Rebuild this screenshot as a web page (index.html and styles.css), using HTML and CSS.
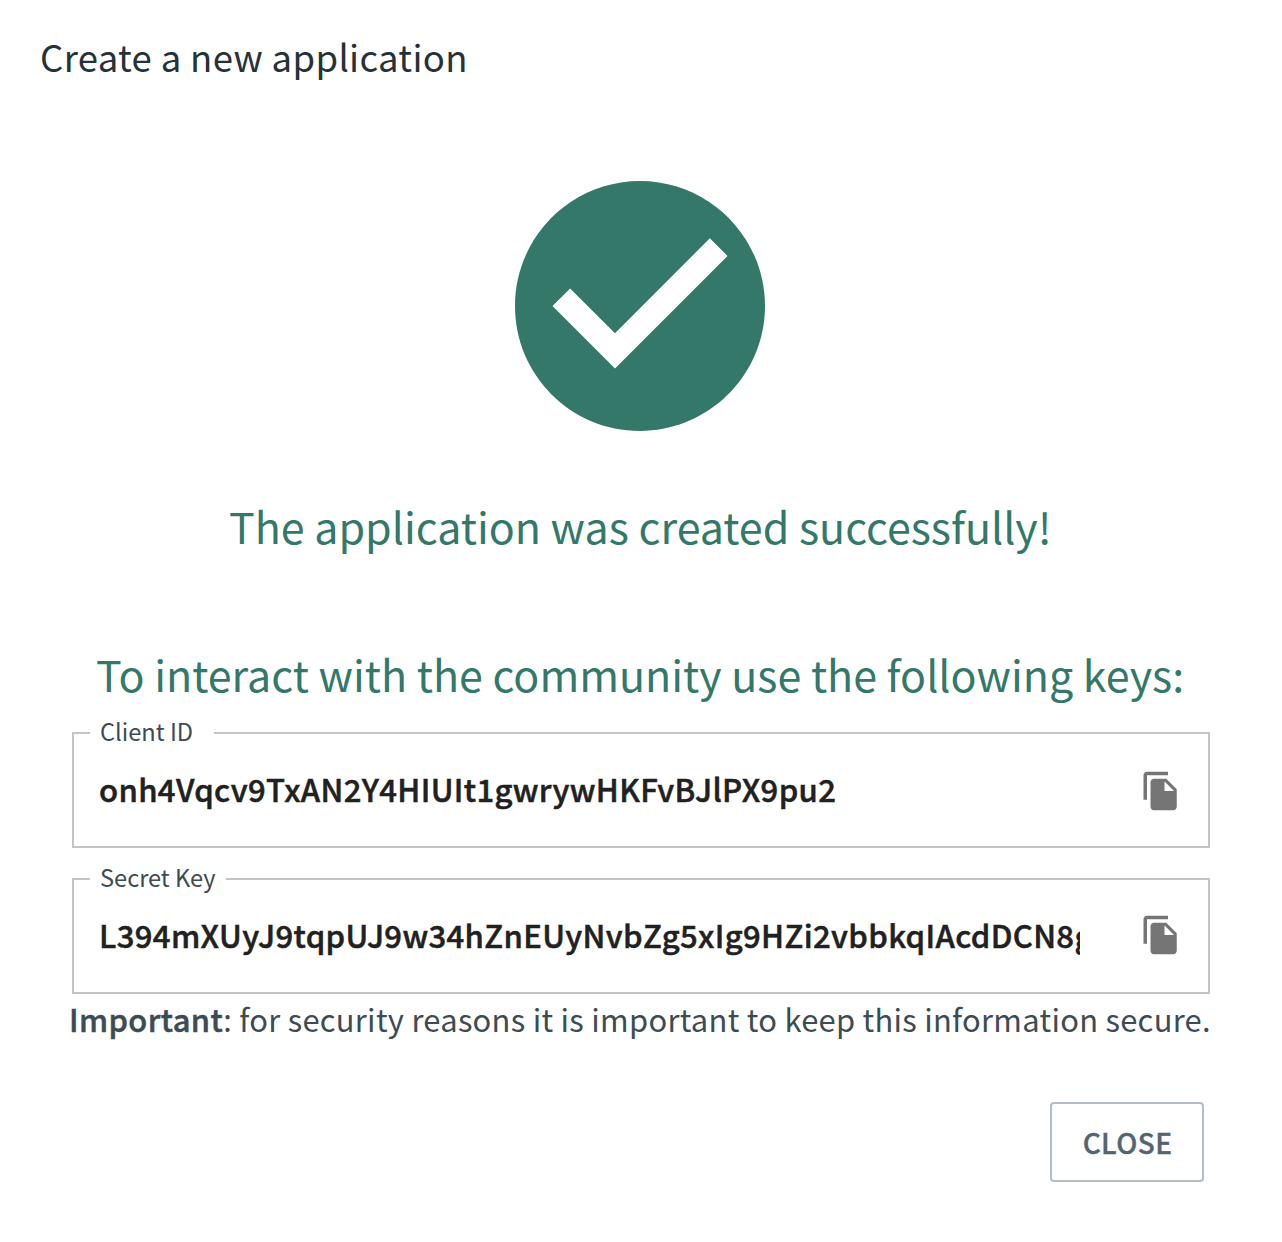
FILE: index.html
```html
<!DOCTYPE html>
<html lang="en">
<head>
<meta charset="utf-8">
<title>Create a new application</title>
<link rel="stylesheet" href="styles.css">
</head>
<body>
<main class="dialog">
  <h1 class="title">Create a new application</h1>
  <svg class="success" viewBox="2 2 20 20" aria-hidden="true">
    <path d="M12 2C6.480 2 2 6.480 2 12s4.480 10 10 10 10-4.480 10-10S17.520 2 12 2zm-2 15-5-5 1.410-1.410L10 14.170l7.590-7.590L19 8l-9 9z"/>
  </svg>
  <p class="headline created">The application was created successfully!</p>
  <p class="headline keys">To interact with the community use the following keys:</p>
  <fieldset class="field client">
    <legend>Client ID</legend>
    <div class="value">onh4Vqcv9TxAN2Y4HIUIt1gwrywHKFvBJlPX9pu2</div>
    <svg class="copy" viewBox="0 0 24 24"><path d="M16 1H4c-1.100 0-2 .9-2 2v14h2V3h12V1zm-1 4 6 6v10c0 1.100-.9 2-2 2H7.990C6.890 23 6 22.100 6 21l.01-14c0-1.100.89-2 1.990-2h7zm-1 7h5.500L14 6.500V12z"/></svg>
  </fieldset>
  <fieldset class="field secret">
    <legend>Secret Key</legend>
    <div class="value">L394mXUyJ9tqpUJ9w34hZnEUyNvbZg5xIg9HZi2vbbkqIAcdDCN8g</div>
    <svg class="copy" viewBox="0 0 24 24"><path d="M16 1H4c-1.100 0-2 .9-2 2v14h2V3h12V1zm-1 4 6 6v10c0 1.100-.9 2-2 2H7.990C6.890 23 6 22.100 6 21l.01-14c0-1.100.89-2 1.990-2h7zm-1 7h5.500L14 6.500V12z"/></svg>
  </fieldset>
  <p class="note"><b>Important</b>: for security reasons it is important to keep this information secure.</p>
  <button class="close">CLOSE</button>
</main>
</body>
</html>
```
FILE: styles.css
```css
* { box-sizing: border-box; }
body { margin: 0; background: #fff; font-family: "Noto Sans CJK SC", "Noto Sans", sans-serif; color: #263238; }
.dialog { display: flex; flex-direction: column; width: 1282px; height: 1242px; overflow: hidden; }
.title { margin: 27px 0 0 40px; height: 60px; line-height: 60px; font-size: 36.5px; letter-spacing: .34px; font-weight: 400; white-space: nowrap; }
.success { width: 250px; height: 250px; margin: 94px 0 0 515px; flex: none; fill: #34786a; }
.headline { margin: 0; height: 70px; line-height: 70px; font-size: 42.97px; color: #34786a; white-space: nowrap; }
.created { margin: 59px 0 0 229px; }
.keys { margin: 78px 0 0 96px; }
.field { display: flex; align-items: flex-start; width: 1138px; height: 130px; margin: 10px 0 0 72px; padding: 16px 26px 0 25px; border: 2px solid #c4c4c4; min-width: 0; }
.secret { margin-top: 16px; }
.field legend { width: 124px; height: 30px; margin-left: -9px; padding: 0 10px; font-size: 23.6px; line-height: 27px; color: #3c4b54; white-space: nowrap; }
.secret legend { width: 136px; }
.value { width: 981px; flex: none; overflow: hidden; font-size: 31.1px; letter-spacing: .34px; line-height: 50px; font-weight: 500; -webkit-text-stroke: .5px; color: #212121; white-space: nowrap; }
.copy { width: 42px; height: 42px; margin: 6px 0 0 60px; flex: none; fill: #757575; }
.secret .copy { margin-top: 4px; }
.note { margin: -2px 0 0 69px; height: 54px; line-height: 54px; font-size: 30.9px; letter-spacing: .28px; color: #3c4b54; white-space: nowrap; }
.note b { font-weight: 500; letter-spacing: .4px; -webkit-text-stroke: .5px; }
.close { margin: 56px 0 0 1050px; width: 154px; height: 80px; padding: 0 0 1px 1px; border: 2px solid #b0bec5; border-radius: 4px; background: #fff; font: 500 28px "Noto Sans CJK SC", sans-serif; -webkit-text-stroke: .4px; letter-spacing: .4px; color: #546570; }
```
